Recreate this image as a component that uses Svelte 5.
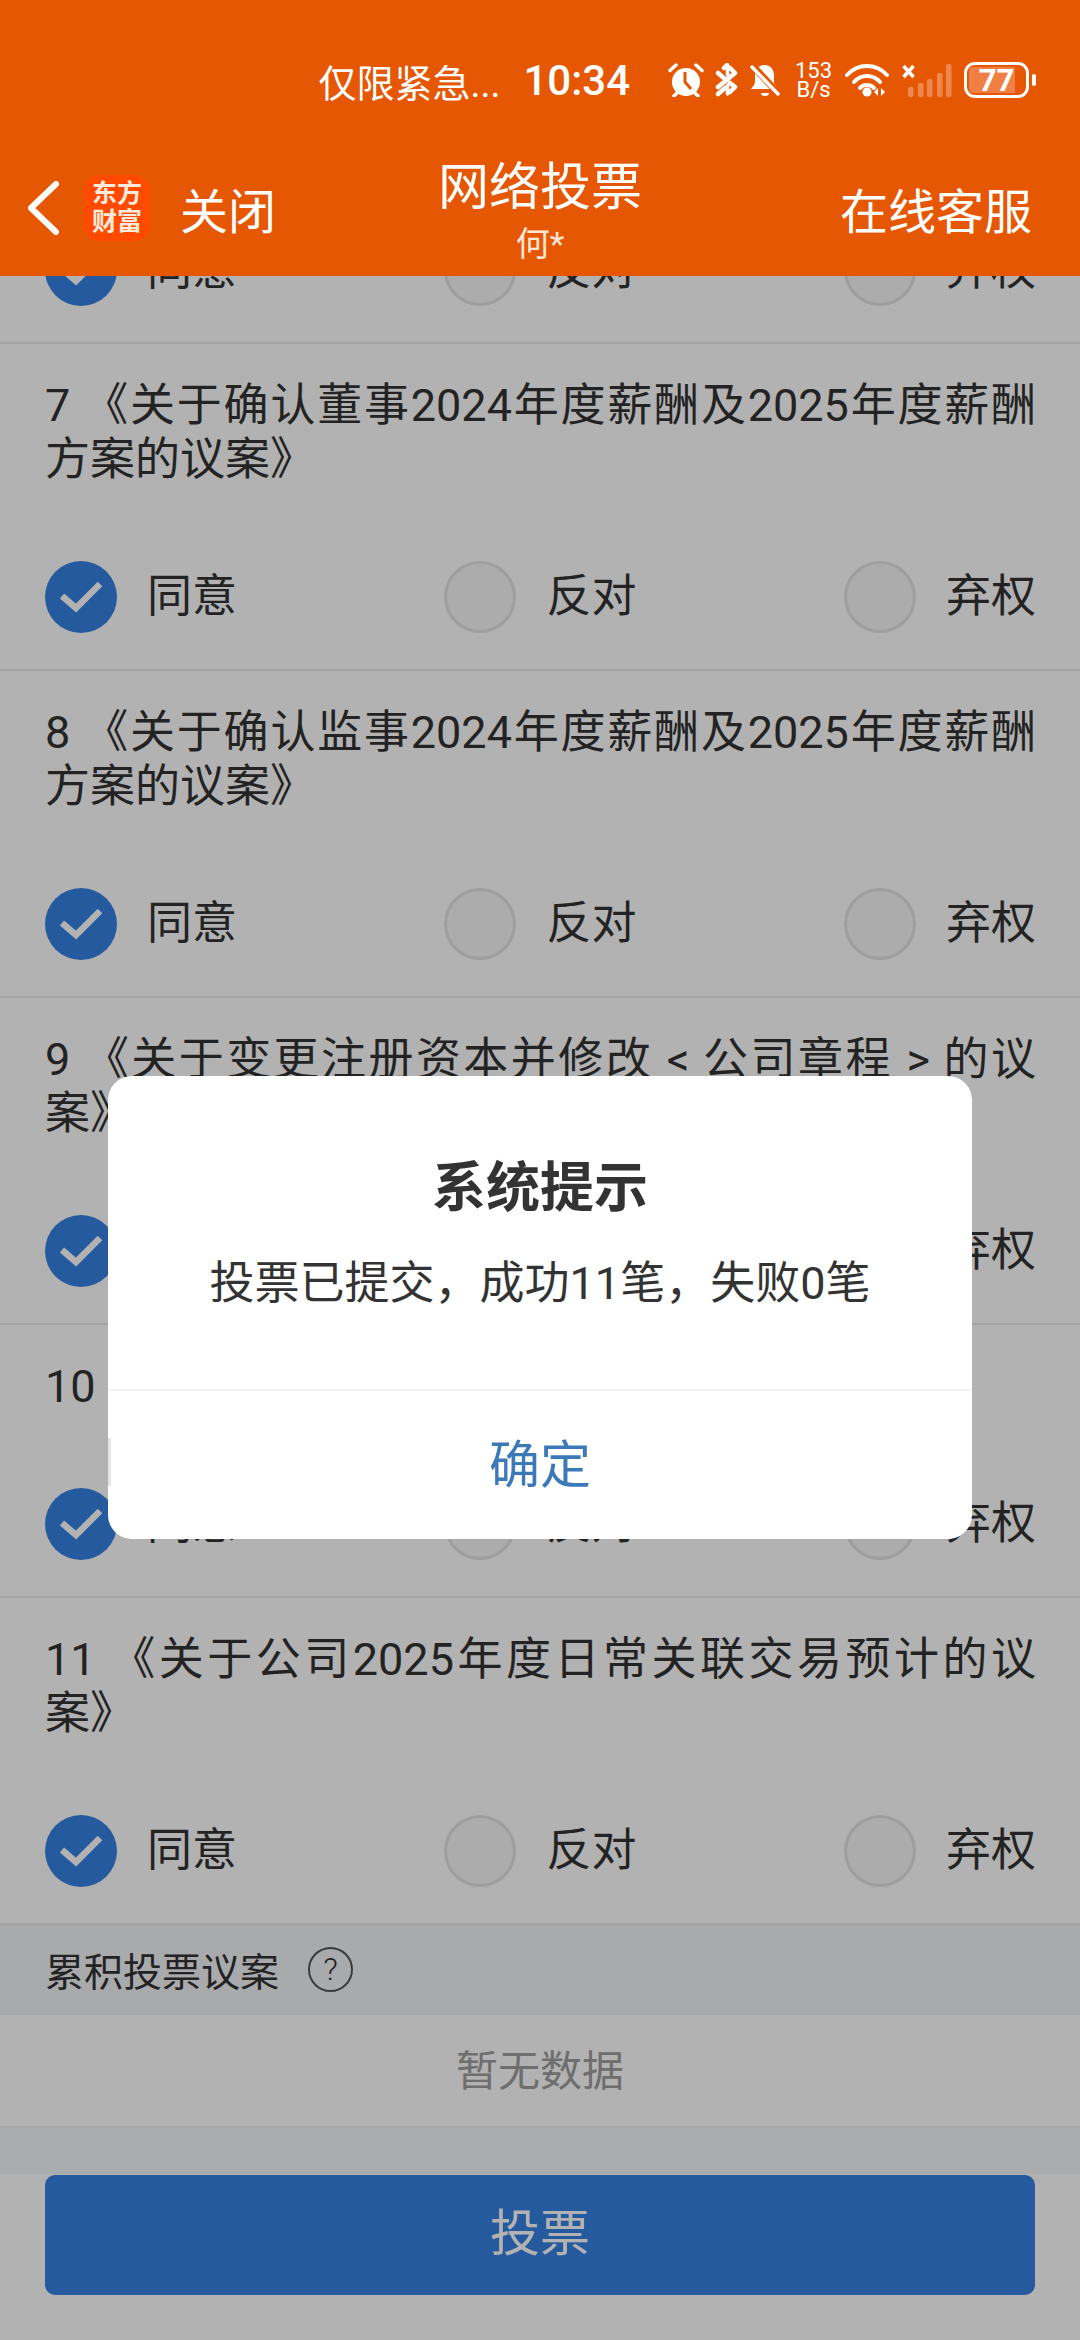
<script>
  const options = ['同意', '反对', '弃权'];
  const rows = [
    { text: '' },
    { text: '7 《关于确认董事2024年度薪酬及2025年度薪酬方案的议案》' },
    { text: '8 《关于确认监事2024年度薪酬及2025年度薪酬方案的议案》' },
    { text: '9 《关于变更注册资本并修改 < 公司章程 > 的议案》' },
    { text: '10' },
    { text: '11 《关于公司2025年度日常关联交易预计的议案》' }
  ];
</script>

<div class="page">
  <header class="top">
    <div class="status">
      <span class="note">仅限紧急...</span>
      <span class="time">10:34</span>
      <svg class="ic-alarm" width="36" height="34" viewBox="0 0 36 34" aria-hidden="true">
        <circle cx="18" cy="19" r="14" fill="#fff" />
        <path d="M17 9v10l6 7" fill="none" stroke="#E65703" stroke-width="3" />
        <path d="M2 7.500 8 2M34 7.500 28 2M6 33l4-4M30 33l-4-4" fill="none" stroke="#fff" stroke-width="3.500" stroke-linecap="round" />
      </svg>
      <svg class="ic-bt" width="25" height="34" viewBox="0 0 25 34" aria-hidden="true">
        <path d="M3 10 10 16M15 20 20 24 15 29M10 25 3 31M3 24 20 10 15 5M12 2 9 5" fill="none" stroke="#fff" stroke-width="4.500" stroke-linejoin="round" stroke-linecap="round" />
        <path d="M12.500 3V12M12.500 22V31" fill="none" stroke="#fff" stroke-width="3.500" stroke-linecap="round" />
      </svg>
      <svg class="ic-bell" width="30" height="33" viewBox="0 0 30 33" aria-hidden="true">
        <path d="M15 1c6 0 9 5 9 11v7l4 6H1c0-1 4-3 4-8v-6c0-6 4-10 10-10Z" fill="#fff" />
        <path d="M11 29h8a4 3 0 0 1-8 0Z" fill="#fff" />
        <path d="M1 0 30 31" stroke="#E65703" stroke-width="7" />
        <path d="M2 3 28 30" stroke="#fff" stroke-width="3.500" stroke-linecap="round" />
      </svg>
      <span class="speed"><span>153</span><span>B/s</span></span>
      <svg class="ic-wifi" width="44" height="34" viewBox="0 0 44 34" aria-hidden="true">
        <path d="M2 12C13 0 31 0 42 12M9 19C16 11 28 11 35 19M15 25C18 21 26 21 29 25" fill="none" stroke="#fff" stroke-width="4" stroke-linecap="round" />
        <circle cx="22" cy="29" r="4.500" fill="#fff" />
        <path d="M33 25v8l-4-4ZM36 25v8l4-4Z" fill="#fff" />
      </svg>
      <svg class="ic-signal" width="50" height="36" viewBox="0 0 50 36" aria-hidden="true">
        <path d="M1.500 4 11.500 15M11.500 4 1.500 15" stroke="#fff" stroke-width="3.500" />
        <g fill="#fff" fill-opacity="0.3">
          <rect x="6" y="25" width="5.500" height="10" rx="2" />
          <rect x="16" y="21" width="5.500" height="14" rx="2" />
          <rect x="25" y="17" width="5.500" height="18" rx="2" />
          <rect x="35" y="11" width="5.500" height="24" rx="2" />
          <rect x="44" y="2" width="5.500" height="33" rx="2" />
        </g>
      </svg>
      <div class="battery">
        <div class="cell">
          <div class="fill"></div>
          <span>77</span>
        </div>
        <div class="cap"></div>
      </div>
    </div>

    <nav class="nav">
      <div class="nav-left">
        <svg class="back" width="32" height="54" viewBox="0 0 32 54" aria-hidden="true">
          <path d="M29 3 4 27 29 51" fill="none" stroke="#fff" stroke-width="6" stroke-linecap="round" stroke-linejoin="round" />
        </svg>
        <div class="logo"><span>东方</span><span>财富</span></div>
        <span class="close">关闭</span>
      </div>
      <div class="nav-title">
        <div class="title">网络投票</div>
        <div class="sub">何*</div>
      </div>
      <div class="nav-right">在线客服</div>
    </nav>
  </header>

  <main class="list">
    {#each rows as row}
      <section class="row">
        {#if row.text}<p class="q">{row.text}</p>{/if}
        <div class="opts">
          {#each options as opt, i}
            <div class="opt">
              <span class="radio" class:on={i === 0}>
                {#if i === 0}
                  <svg width="44" height="34" viewBox="0 0 44 34" aria-hidden="true">
                    <path d="M3 16 17 28 41 4" fill="none" stroke="#fff" stroke-width="6.500" />
                  </svg>
                {/if}
              </span>
              <span class="lab">{opt}</span>
            </div>
          {/each}
        </div>
      </section>
    {/each}
    <div class="sec">
      <span>累积投票议案</span>
      <span class="help">?</span>
    </div>
    <div class="empty">暂无数据</div>
  </main>

  <footer class="foot">
    <div class="band"></div>
    <button class="vote">投票</button>
  </footer>

  <div class="overlay">
    <div class="modal">
      <div class="sliver"></div>
      <div class="m-body">
        <div class="m-title">系统提示</div>
        <div class="m-text">投票已提交，成功11笔，失败0笔</div>
      </div>
      <div class="m-btn">确定</div>
    </div>
  </div>
</div>

<style>
  :global(body) {
    margin: 0;
    background: #fff;
  }
  .page {
    position: relative;
    width: 1080px;
    height: 2340px;
    display: flex;
    flex-direction: column;
    overflow: hidden;
    font-family: Roboto, "Noto Sans CJK SC", sans-serif;
    color: #333;
  }
  .top {
    flex: none;
    height: 276px;
    background: #e65703;
    color: #fff;
    display: flex;
    flex-direction: column;
  }
  .status {
    flex: none;
    height: 145px;
    padding: 15px 44px 0 0;
    box-sizing: border-box;
    display: flex;
    justify-content: flex-end;
    align-items: center;
  }
  .note {
    font-size: 38px;
    margin-right: 23px;
  }
  .time {
    font-size: 42px;
    font-weight: 500;
    margin-right: 38px;
  }
  .ic-alarm {
    margin-right: 11px;
  }
  .ic-bt {
    margin-right: 10px;
  }
  .ic-bell {
    margin-right: 16px;
  }
  .speed {
    display: flex;
    flex-direction: column;
    align-items: center;
    font-size: 22px;
    line-height: 19px;
    width: 35px;
    margin-right: 14px;
  }
  .ic-wifi {
    margin-right: 13px;
  }
  .ic-signal {
    margin-right: 12px;
  }
  .battery {
    display: flex;
    align-items: center;
    gap: 3px;
  }
  .cell {
    position: relative;
    width: 65px;
    height: 36px;
    box-sizing: border-box;
    border: 3px solid #fff;
    border-radius: 11px;
    overflow: hidden;
    display: flex;
    align-items: center;
    justify-content: center;
  }
  .fill {
    position: absolute;
    left: 2px;
    top: 2px;
    bottom: 2px;
    width: 46px;
    border-radius: 4px 0 0 4px;
    background: #ef7f42;
  }
  .cell span {
    position: relative;
    font-size: 31px;
    font-weight: 700;
    line-height: 1;
  }
  .cap {
    width: 4px;
    height: 12px;
    border-radius: 2px;
    background: #fff;
  }
  .nav {
    flex: 1;
    min-height: 0;
    display: grid;
    grid-template-columns: 1fr auto 1fr;
    align-items: center;
    padding: 0 27px 7px;
  }
  .nav-left {
    display: flex;
    align-items: center;
  }
  .back {
    margin-right: 25px;
  }
  .logo {
    width: 66px;
    height: 66px;
    border-radius: 16px;
    background: #ff4a00;
    color: #ffeadb;
    display: flex;
    flex-direction: column;
    align-items: center;
    justify-content: center;
    font-size: 25px;
    font-weight: 700;
    line-height: 28px;
    margin-right: 30px;
  }
  .close {
    font-size: 48px;
  }
  .nav-title {
    text-align: center;
  }
  .title {
    font-size: 51px;
    line-height: 62px;
    margin-top: 12px;
  }
  .sub {
    font-size: 34px;
    line-height: 50px;
    margin-bottom: 2px;
    color: #fde6d8;
  }
  .nav-right {
    text-align: right;
    font-size: 48px;
    padding-right: 21px;
  }
  .list {
    flex: 1;
    min-height: 0;
    overflow: hidden;
    display: flex;
    flex-direction: column;
    justify-content: flex-end;
    background: #fff;
  }
  .row {
    flex: none;
    padding: 35px 44px 36px 45px;
    border-bottom: 2px solid #ebebeb;
  }
  .q {
    margin: 0 0 74px;
    font-size: 45px;
    line-height: 54px;
    text-align: justify;
  }
  .opts {
    display: flex;
    justify-content: space-between;
  }
  .opt {
    display: flex;
    align-items: center;
    gap: 30px;
  }
  .radio {
    width: 72px;
    height: 72px;
    box-sizing: border-box;
    border-radius: 50%;
    border: 3px solid #e2e2e2;
    background: #f6f6f6;
    display: flex;
    align-items: center;
    justify-content: center;
  }
  .radio.on {
    border: none;
    background: #3582e2;
  }
  .lab {
    font-size: 45px;
    line-height: 54px;
  }
  .sec {
    flex: none;
    height: 90px;
    box-sizing: border-box;
    background: #f3f4f7;
    border-bottom: 2px solid #eeeeee;
    padding: 0 45px;
    display: flex;
    align-items: center;
    gap: 29px;
    font-size: 39px;
  }
  .help {
    width: 45px;
    height: 45px;
    box-sizing: border-box;
    border: 2px solid #555;
    border-radius: 50%;
    font-size: 32px;
    line-height: 40px;
    text-align: center;
    font-weight: 300;
  }
  .empty {
    flex: none;
    height: 113px;
    box-sizing: border-box;
    padding-bottom: 6px;
    border-bottom: 2px solid #eeeeee;
    display: flex;
    align-items: center;
    justify-content: center;
    font-size: 42px;
    color: #9e9e9e;
  }
  .foot {
    flex: none;
    height: 212px;
    box-sizing: border-box;
    background: #fff;
  }
  .band {
    height: 46px;
    background: #f4f5f8;
  }
  .vote {
    display: block;
    width: 990px;
    height: 120px;
    margin: 1px 45px 0;
    padding: 0 0 12px;
    border: none;
    border-radius: 10px;
    background: #3582e2;
    color: #fff;
    font: inherit;
    font-size: 50px;
  }
  .overlay {
    position: absolute;
    top: 276px;
    left: 0;
    right: 0;
    bottom: 0;
    background: rgba(0, 0, 0, 0.3);
    display: flex;
    align-items: center;
    justify-content: center;
    padding-bottom: 1px;
    box-sizing: border-box;
  }
  .modal {
    position: relative;
    width: 864px;
    height: 463px;
    background: #fff;
    border-radius: 24px;
    display: flex;
    flex-direction: column;
  }
  .sliver {
    position: absolute;
    left: 0;
    top: 362px;
    width: 3px;
    height: 48px;
    background: #e5e5e5;
  }
  .m-body {
    height: 315px;
    box-sizing: border-box;
    padding-top: 77px;
    border-bottom: 2px solid #f2f2f2;
    text-align: center;
  }
  .m-title {
    font-size: 54px;
    line-height: 72px;
    font-weight: 700;
    margin-bottom: 29px;
  }
  .m-text {
    font-size: 45px;
    line-height: 60px;
  }
  .m-btn {
    flex: 1;
    display: flex;
    align-items: center;
    justify-content: center;
    font-size: 51px;
    color: #3b79b9;
    padding-bottom: 9px;
  }
</style>
